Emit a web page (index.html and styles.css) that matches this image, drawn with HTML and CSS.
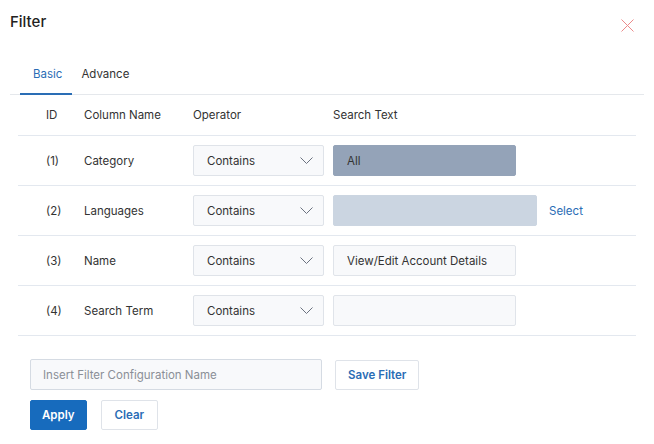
FILE: index.html
```html
<!DOCTYPE html>
<html lang="en">
<head>
    <meta charset="UTF-8">
    <title>Filter</title>
    <link rel="stylesheet" href="styles.css">
</head>
<body>
    <div class="modal">
        <div class="modal-head">
            <h2>Filter</h2>
            <button class="close-btn" aria-label="Close">
                <svg width="13" height="13" viewBox="0 0 13 13"><path d="M0.5 0.5 L12.5 12.5 M12.5 0.5 L0.5 12.5" stroke="#ec8a8a" stroke-width="1" fill="none"/></svg>
            </button>
        </div>

        <div class="tabs">
            <span class="tab active">Basic</span>
            <span class="tab">Advance</span>
        </div>

        <div class="filter-table">
            <div class="row head">
                <span>ID</span>
                <span>Column Name</span>
                <span>Operator</span>
                <span>Search Text</span>
            </div>
            <div class="row">
                <span>(1)</span>
                <span>Category</span>
                <div class="select">Contains <svg class="chev" width="13" height="7" viewBox="0 0 13 7"><path d="M0.5 0.5 L6.5 6.5 L12.5 0.5" stroke="#6b7280" fill="none"/></svg></div>
                <div class="search"><div class="box box-dark">All</div></div>
            </div>
            <div class="row">
                <span>(2)</span>
                <span>Languages</span>
                <div class="select">Contains <svg class="chev" width="13" height="7" viewBox="0 0 13 7"><path d="M0.5 0.5 L6.5 6.5 L12.5 0.5" stroke="#6b7280" fill="none"/></svg></div>
                <div class="search"><div class="box box-wide"></div><a href="#" class="link">Select</a></div>
            </div>
            <div class="row">
                <span>(3)</span>
                <span>Name</span>
                <div class="select">Contains <svg class="chev" width="13" height="7" viewBox="0 0 13 7"><path d="M0.5 0.5 L6.5 6.5 L12.5 0.5" stroke="#6b7280" fill="none"/></svg></div>
                <div class="search"><div class="box">View/Edit Account Details</div></div>
            </div>
            <div class="row">
                <span>(4)</span>
                <span>Search Term</span>
                <div class="select">Contains <svg class="chev" width="13" height="7" viewBox="0 0 13 7"><path d="M0.5 0.5 L6.5 6.5 L12.5 0.5" stroke="#6b7280" fill="none"/></svg></div>
                <div class="search"><div class="box"></div></div>
            </div>
        </div>

        <div class="footer">
            <div class="footer-row">
                <input type="text" class="name-input" placeholder="Insert Filter Configuration Name">
                <button class="btn btn-outline save">Save Filter</button>
            </div>
            <div class="footer-row actions">
                <button class="btn btn-primary">Apply</button>
                <button class="btn btn-outline clear">Clear</button>
            </div>
        </div>
    </div>
</body>
</html>
```

FILE: styles.css
```css
body {
    margin: 0;
    background: #fff;
    color: #333;
    font-family: Inter, "Noto Sans", sans-serif;
    font-size: 11.5px;
}
.modal {
    width: 654px;
    padding: 0 10px;
    box-sizing: border-box;
}
.modal-head {
    display: flex;
    justify-content: space-between;
    align-items: center;
    padding-top: 12px;
    height: 20px;
}
.modal-head h2 {
    margin: 0;
    font-size: 15px;
    font-weight: 500;
    color: #222;
    line-height: 20px;
}
.close-btn {
    background: none;
    border: none;
    padding: 0;
    margin: 6px 10px 0 0;
    line-height: 0;
    cursor: pointer;
}
.tabs {
    display: flex;
    margin-top: 28px;
    border-bottom: 1px solid #e5e8ec;
}
.tab {
    padding: 6px 10px 11px 13px;
    line-height: 16px;
    color: #333;
    border-bottom: 2px solid transparent;
    margin-bottom: -1px;
    margin-left: 10px;
}
.tab + .tab {
    margin-left: 0;
    padding-left: 9px;
}
.tab.active {
    color: #2a6db5;
    border-bottom-color: #2a6db5;
}
.filter-table {
    margin: 0 8px;
}
.row {
    display: grid;
    grid-template-columns: 38px 109px 140px 1fr;
    align-items: center;
    padding: 9px 0 9px 28px;
    border-bottom: 1px solid #e3e8ef;
    min-height: 31px;
}
.row.head {
    padding: 5px 0 5px 28px;
    min-height: 30px;
}
.select {
    width: 131px;
    height: 31px;
    box-sizing: border-box;
    border: 1px solid #dfe3e9;
    border-radius: 2px;
    background: #f8f9fb;
    display: flex;
    align-items: center;
    justify-content: space-between;
    padding: 0 10px 0 13px;
}
.search {
    display: flex;
    align-items: center;
}
.box {
    width: 183px;
    height: 31px;
    box-sizing: border-box;
    border: 1px solid #e0e4ea;
    border-radius: 2px;
    background: #f8f9fb;
    display: flex;
    align-items: center;
    padding: 0 13px;
}
.box-dark {
    background: #94a3b8;
    border-color: #94a3b8;
}
.box-wide {
    width: 204px;
    background: #cbd5e1;
    border-color: #cbd5e1;
}
.link {
    color: #2a6db5;
    text-decoration: none;
    margin-left: 12px;
}
.footer {
    padding: 23px 0 0 20px;
}
.footer-row {
    display: flex;
    align-items: center;
}
.name-input {
    width: 292px;
    height: 31px;
    box-sizing: border-box;
    border: 1px solid #d5dbe3;
    border-radius: 2px;
    background: #f8f9fb;
    padding: 0 12px;
    font-family: inherit;
    font-size: 11.5px;
    color: #333;
}
.name-input::placeholder {
    color: #8a8f97;
}
.btn {
    height: 30px;
    font-family: inherit;
    font-size: 11.5px;
    font-weight: 600;
    border-radius: 2px;
    cursor: pointer;
    padding: 0 11px;
}
.btn-outline {
    background: #fff;
    color: #2a6db5;
    border: 1px solid #dfe3e9;
}
.save {
    margin-left: 13px;
    padding: 0 12px;
}
.clear {
    padding: 0 13px;
}
.actions {
    margin-top: 10px;
    gap: 14px;
}
.btn-primary {
    background: #176bbd;
    color: #fff;
    border: 1px solid #176bbd;
}
```
